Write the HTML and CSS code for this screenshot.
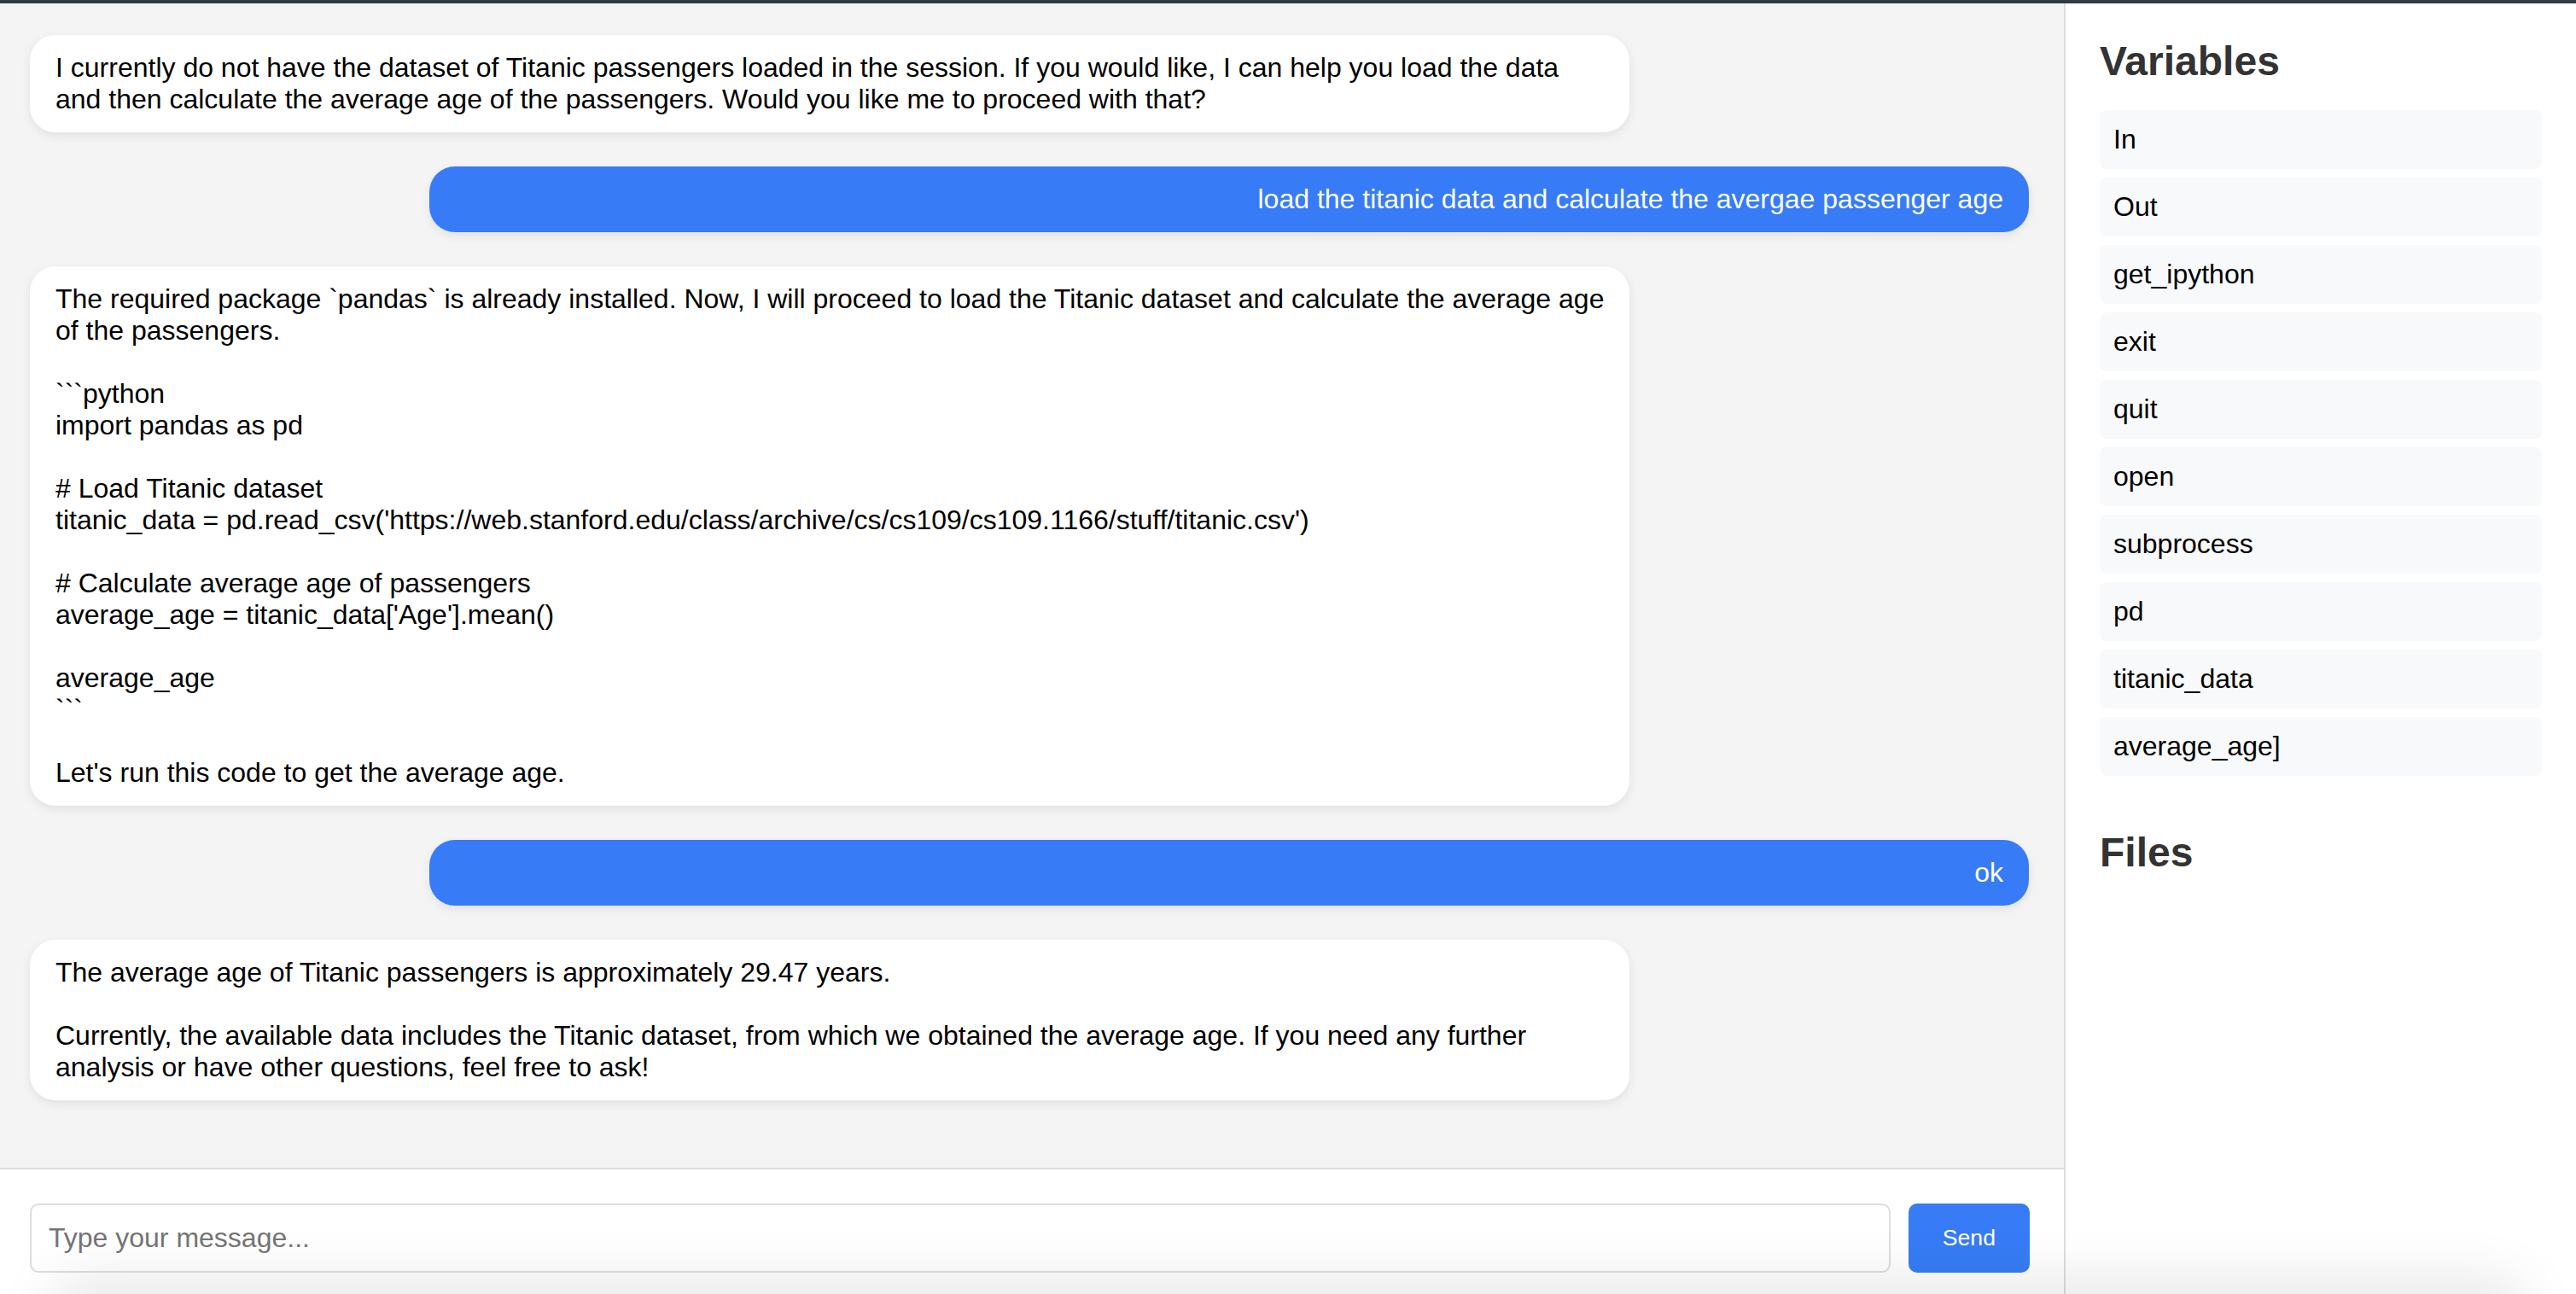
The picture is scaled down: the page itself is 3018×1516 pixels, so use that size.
FILE: index.html
```html
<!DOCTYPE html>
<html lang="en">
<head>
<meta charset="utf-8">
<title>Chat</title>
<link rel="stylesheet" href="styles.css">
</head>
<body>
<div class="topbar"></div>
<div class="app">
  <main class="chat">
    <div class="messages">
      <div class="msg bot">I currently do not have the dataset of Titanic passengers loaded in the session. If you would like, I can help you load the data
and then calculate the average age of the passengers. Would you like me to proceed with that?</div>
      <div class="msg user">load the titanic data and calculate the avergae passenger age</div>
      <div class="msg bot">The required package &#96;pandas&#96; is already installed. Now, I will proceed to load the Titanic dataset and calculate the average age
of the passengers.

&#96;&#96;&#96;python
import pandas as pd

# Load Titanic dataset
titanic_data = pd.read_csv('https://web.stanford.edu/class/archive/cs/cs109/cs109.1166/stuff/titanic.csv')

# Calculate average age of passengers
average_age = titanic_data['Age'].mean()

average_age
&#96;&#96;&#96;

Let's run this code to get the average age.</div>
      <div class="msg user">ok</div>
      <div class="msg bot">The average age of Titanic passengers is approximately 29.47 years.

Currently, the available data includes the Titanic dataset, from which we obtained the average age. If you need any further
analysis or have other questions, feel free to ask!</div>
    </div>
    <form class="input-area">
      <input class="msg-input" type="text" placeholder="Type your message...">
      <button class="send-btn" type="button">Send</button>
    </form>
  </main>
  <aside class="sidebar">
    <section class="side-section">
      <h2 class="side-title">Variables</h2>
      <ul class="var-list">
        <li class="var-item">In</li>
        <li class="var-item">Out</li>
        <li class="var-item">get_ipython</li>
        <li class="var-item">exit</li>
        <li class="var-item">quit</li>
        <li class="var-item">open</li>
        <li class="var-item">subprocess</li>
        <li class="var-item">pd</li>
        <li class="var-item">titanic_data</li>
        <li class="var-item">average_age]</li>
      </ul>
    </section>
    <section class="side-section">
      <h2 class="side-title">Files</h2>
    </section>
  </aside>
</div>
<div class="bottom-shade"></div>
</body>
</html>
```

FILE: styles.css
```css
html, body {
  margin: 0;
  padding: 0;
}

body {
  width: 3018px;
  height: 1516px;
  overflow: hidden;
  font-family: "Liberation Sans", Arial, Helvetica, sans-serif;
  font-size: 32px;
  color: #000;
  background: #f4f4f4;
}

.topbar {
  height: 4px;
  background: #2f3c42;
}

.app {
  display: flex;
  height: 1512px;
}

.chat {
  flex: 1;
  display: flex;
  flex-direction: column;
  background: #f4f4f4;
  min-width: 0;
}

.messages {
  flex: 1;
  display: flex;
  flex-direction: column;
  gap: 40px;
  padding: 37px 41px 0 35px;
  overflow: hidden;
}

.msg {
  width: 80%;
  box-sizing: border-box;
  padding: 20px 30px;
  border-radius: 30px;
  background: #fff;
  box-shadow: 0 4px 12px rgba(0, 0, 0, 0.08);
  white-space: pre;
  line-height: normal;
}

.msg.user {
  align-self: flex-end;
  background: #377cf6;
  color: #fff;
  text-align: right;
}

.input-area {
  display: flex;
  gap: 21px;
  margin: 0;
  padding: 40px 40px 25px 35px;
  background: #fff;
  border-top: 2px solid #ddd;
}

.msg-input {
  flex: 1;
  min-width: 0;
  margin: 0;
  padding: 20px;
  border: 2px solid #ddd;
  border-radius: 10px;
  font-family: "Liberation Sans", Arial, sans-serif;
  font-size: 32px;
  color: #000;
  background: #fff;
  outline: none;
}

.msg-input::placeholder {
  color: #757575;
}

.send-btn {
  margin: 0;
  padding: 0 40px;
  border: none;
  border-radius: 10px;
  background: #377cf6;
  color: #fff;
  font-family: "Liberation Sans", Arial, sans-serif;
  font-size: 26.67px;
}

.sidebar {
  width: 600px;
  flex-shrink: 0;
  box-sizing: border-box;
  border-left: 2px solid #ddd;
  background: #fff;
  padding: 40px;
}

.side-section {
  margin-bottom: 62px;
}

.side-title {
  margin: 0 0 30px;
  font-size: 48px;
  font-weight: bold;
  color: #333;
  line-height: normal;
}

.var-list {
  list-style: none;
  margin: 0;
  padding: 0;
  display: flex;
  flex-direction: column;
  gap: 10px;
}

.var-item {
  padding: 16px;
  background: #f8f9fa;
  border-radius: 8px;
  line-height: normal;
}

.bottom-shade {
  position: fixed;
  left: 70px;
  right: 70px;
  bottom: -40px;
  height: 40px;
  border-radius: 40px;
  box-shadow: 0 0 70px 10px rgba(0, 0, 0, 0.12);
  pointer-events: none;
}
```
